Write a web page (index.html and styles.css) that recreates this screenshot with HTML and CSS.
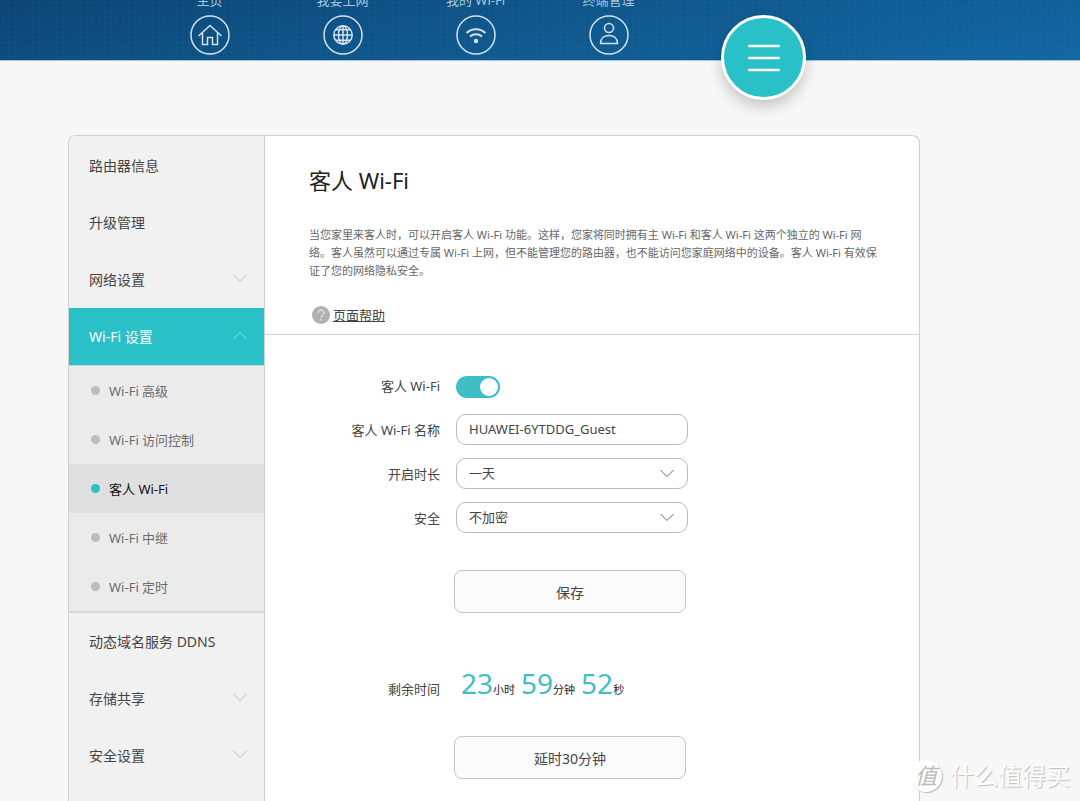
FILE: index.html
```
<!DOCTYPE html>
<html lang="zh-CN">
<head>
<meta charset="utf-8">
<meta name="viewport" content="width=device-width, initial-scale=1">
<title>客人 Wi-Fi</title>
<link rel="stylesheet" href="styles.css">
</head>
<body>
<div class="page">
  <header class="topbar">
    <nav class="topnav">
      <a class="topnav-item" href="#home">
        <span>主页</span>
        <svg class="topnav-icon" viewBox="0 0 40 40"><circle cx="20" cy="20" r="19"/><path d="M8.500 21 20 10.500 31.500 21M12.500 18v11.500h5v-7h5v7h5V18"/></svg>
      </a>
      <a class="topnav-item" href="#internet">
        <span>我要上网</span>
        <svg class="topnav-icon" viewBox="0 0 40 40"><circle cx="20" cy="20" r="19"/><circle cx="20" cy="20" r="9.200"/><ellipse cx="20" cy="20" rx="4.500" ry="9.200"/><path d="M20 10.800v18.400M10.800 20h18.400M12.500 14.800h15M12.500 25.200h15"/></svg>
      </a>
      <a class="topnav-item" href="#wifi">
        <span>我的 Wi-Fi</span>
        <svg class="topnav-icon" viewBox="0 0 40 40"><circle cx="20" cy="20" r="19"/><path class="arc" d="M10.500 18c5.500-5 13.500-5 19 0M14 21.500c3.500-3 8.500-3 12 0"/><circle class="solid" cx="20" cy="26" r="2.200"/></svg>
      </a>
      <a class="topnav-item" href="#devices">
        <span>终端管理</span>
        <svg class="topnav-icon" viewBox="0 0 40 40"><circle cx="20" cy="20" r="19"/><circle cx="20" cy="13" r="4.500"/><path d="M11.500 28.500c0-5 3.500-8 8.500-8s8.500 3 8.500 8z"/></svg>
      </a>
    </nav>
    <button class="more" type="button" aria-label="更多功能">
      <svg class="more-icon" viewBox="0 0 32 28"><path d="M1 2h30M1 14h30M1 26h30"/></svg>
    </button>
  </header>

  <div class="panel">
    <nav class="sidebar">
      <a class="side-item" href="#info">路由器信息</a>
      <a class="side-item" href="#upgrade">升级管理</a>
      <a class="side-item" href="#network">网络设置<svg class="chevron" viewBox="0 0 14 9"><path d="M.5 1 7 7.500 13.500 1"/></svg></a>
      <a class="side-item side-item-open" href="#wifi-settings">Wi-Fi 设置<svg class="chevron" viewBox="0 0 14 9"><path d="M.5 8 7 1.500 13.500 8"/></svg></a>
      <div class="submenu">
        <a class="sub-item" href="#advanced">Wi-Fi 高级</a>
        <a class="sub-item" href="#access">Wi-Fi 访问控制</a>
        <a class="sub-item sub-item-current" href="#guest" aria-current="page">客人 Wi-Fi</a>
        <a class="sub-item" href="#repeater">Wi-Fi 中继</a>
        <a class="sub-item" href="#timer">Wi-Fi 定时</a>
      </div>
      <a class="side-item" href="#ddns">动态域名服务 DDNS</a>
      <a class="side-item" href="#storage">存储共享<svg class="chevron" viewBox="0 0 14 9"><path d="M.5 1 7 7.500 13.500 1"/></svg></a>
      <a class="side-item" href="#security">安全设置<svg class="chevron" viewBox="0 0 14 9"><path d="M.5 1 7 7.500 13.500 1"/></svg></a>
    </nav>

    <main class="content">
      <section class="intro">
        <h1 class="title">客人 Wi-Fi</h1>
        <p class="description">当您家里来客人时，可以开启客人 Wi-Fi 功能。这样，您家将同时拥有主 Wi-Fi 和客人 Wi-Fi 这两个独立的 Wi-Fi 网<br>络。客人虽然可以通过专属 Wi-Fi 上网，但不能管理您的路由器，也不能访问您家庭网络中的设备。客人 Wi-Fi 有效保<br>证了您的网络隐私安全。</p>
        <a class="help" href="#help">
          <svg class="help-icon" viewBox="0 0 18 18"><circle cx="9" cy="9" r="9"/><path d="M6 7c0-4 6-4 6-.5C12 9 9 8.800 9 11.500M9 13v1.500"/></svg>
          <span class="help-text">页面帮助</span>
        </a>
      </section>

      <form class="form">
        <div class="fields">
          <label class="label" for="guest-on">客人 Wi-Fi</label>
          <input class="switch" id="guest-on" type="checkbox" checked>
          <label class="label" for="guest-name">客人 Wi-Fi 名称</label>
          <input class="control" id="guest-name" type="text" value="HUAWEI-6YTDDG_Guest">
          <label class="label" for="duration">开启时长</label>
          <div class="picker">
            <select class="control" id="duration"><option>一天</option></select>
            <svg class="chevron" viewBox="0 0 14 9"><path d="M.5 1 7 7.500 13.500 1"/></svg>
          </div>
          <label class="label" for="security-mode">安全</label>
          <div class="picker">
            <select class="control" id="security-mode"><option>不加密</option></select>
            <svg class="chevron" viewBox="0 0 14 9"><path d="M.5 1 7 7.500 13.500 1"/></svg>
          </div>
        </div>
        <button class="button" type="button">保存</button>
        <div class="remaining">
          <span class="label">剩余时间</span>
          <div class="clock">
            <span><b class="digits">23</b>小时</span>
            <span><b class="digits">59</b>分钟</span>
            <span><b class="digits">52</b>秒</span>
          </div>
        </div>
        <button class="button" type="button">延时30分钟</button>
      </form>
    </main>
  </div>

  <div class="watermark"><span class="watermark-badge">值</span><span>什么值得买</span></div>
</div>
</body>
</html>
```
FILE: styles.css
```
* {
  box-sizing: border-box;
}

body {
  margin: 0;
  background: #f7f7f7;
  color: #444;
  font-family: "Noto Sans", "Noto Sans CJK SC", sans-serif;
  font-size: 13px;
}

a {
  color: inherit;
  text-decoration: none;
}

button,
input,
select {
  font: inherit;
  color: inherit;
}

svg {
  fill: none;
  stroke: currentColor;
}

.page {
  position: relative;
  display: flex;
  flex-direction: column;
  height: 100vh;
  overflow: hidden;
}

.topbar {
  display: flex;
  align-items: flex-start;
  flex: none;
  height: 61px;
  padding-left: 143px;
  border-bottom: 1px solid #a9c3d8;
  background:
    radial-gradient(circle, rgba(60, 150, 180, 0.08) 1px, transparent 2px) 0 0 / 6px 5px,
    linear-gradient(168deg, #0c4474 0%, #0f5488 40%, #1267a3 100%);
}

.topnav {
  display: flex;
  margin-top: -10px;
}

.topnav-item {
  display: flex;
  flex-direction: column;
  align-items: center;
  gap: 5px;
  width: 133px;
  color: #a9c6dd;
  line-height: 20px;
}

.topnav-icon {
  width: 40px;
  height: 40px;
  color: #d3e2ee;
  stroke-width: 1.5;
}

.topnav-icon .arc {
  stroke-width: 2;
}

.topnav-icon .solid {
  fill: currentColor;
  stroke: none;
}

.more {
  display: grid;
  place-items: center;
  width: 85px;
  height: 85px;
  margin: 15px 0 0 46px;
  padding: 0;
  border: 3px solid #fff;
  border-radius: 50%;
  background: #29c0c8;
  color: #fff;
  box-shadow: 0 7px 14px rgba(0, 0, 0, 0.2);
}

.more-icon {
  width: 32px;
  height: 28px;
  stroke-width: 2.5;
  stroke-linecap: round;
}

.panel {
  display: flex;
  flex: 1;
  min-height: 0;
  margin: 74px 160px 0 68px;
  border: 1px solid #d0d0d0;
  border-bottom: 0;
  border-radius: 8px 8px 0 0;
  background: #fff;
  overflow: hidden;
}

.sidebar {
  flex: none;
  width: 196px;
  padding-top: 1px;
  border-right: 1px solid #d0d0d0;
  background: #f1f1f1;
}

.side-item {
  display: flex;
  align-items: center;
  justify-content: space-between;
  height: 57px;
  padding: 0 17px 2px 20px;
  font-size: 14px;
}

.side-item-open {
  height: 58px;
  border-bottom: 1px solid #d0d0d0;
  background: #29c0c8;
  color: #fff;
}

.chevron {
  width: 14px;
  height: 9px;
  color: #b8b8b8;
}

.side-item-open .chevron {
  color: #a5e3e6;
}

.submenu {
  border-bottom: 2px solid #d8d8d8;
  background: #ebebeb;
}

.sub-item {
  display: flex;
  align-items: center;
  gap: 9px;
  height: 49px;
  padding-left: 22px;
  color: #6c6c6c;
}

.sub-item::before {
  content: "";
  width: 9px;
  height: 9px;
  border-radius: 50%;
  background: #bcbcbc;
}

.sub-item-current {
  background: #dfdfdf;
  color: #111;
}

.sub-item-current::before {
  background: #29c0c8;
}

.content {
  flex: 1;
  min-width: 0;
}

.intro {
  padding: 29px 30px 10px 44px;
  border-bottom: 1px solid #d0d0d0;
}

.title {
  margin: 0;
  color: #222;
  font-size: 22px;
  font-weight: 400;
  line-height: 30px;
}

.description {
  margin: 31px 0 26px;
  color: #666;
  font-size: 11px;
  line-height: 18px;
  white-space: nowrap;
}

.help {
  display: flex;
  align-items: center;
  gap: 3px;
  padding-left: 3px;
  line-height: 18px;
}

.help-icon {
  width: 18px;
  height: 18px;
  color: #fff;
}

.help-icon circle {
  fill: #b0b0b0;
  stroke: none;
}

.help-text {
  text-decoration: underline;
}

.form {
  padding-top: 28px;
}

.fields {
  display: grid;
  grid-template-columns: 175px 232px;
  grid-auto-rows: 44px;
  align-items: center;
  column-gap: 16px;
}

.label {
  text-align: right;
}

.switch {
  appearance: none;
  width: 44px;
  height: 22px;
  margin: 4px 0 0;
  padding: 2px 2px 2px 24px;
  border-radius: 11px;
  background: #3fbfc5;
}

.switch::before {
  content: "";
  display: block;
  width: 18px;
  height: 18px;
  border-radius: 50%;
  background: #fff;
}

.control {
  appearance: none;
  width: 100%;
  height: 31px;
  padding: 0 12px;
  border: 1px solid #bbb;
  border-radius: 10px;
  background: #fff;
}

.picker {
  display: grid;
  align-items: center;
}

.picker > * {
  grid-area: 1 / 1;
}

.picker .chevron {
  justify-self: end;
  margin-right: 14px;
  color: #666;
  pointer-events: none;
}

.button {
  display: block;
  width: 232px;
  height: 43px;
  margin: 31px 0 0 189px;
  border: 1px solid #c4c4c4;
  border-radius: 8px;
  background: #fbfbfb;
  font-size: 14px;
}

.remaining {
  display: grid;
  grid-template-columns: 175px 1fr;
  align-items: baseline;
  column-gap: 21px;
  margin-top: 50px;
}

.remaining + .button {
  margin-top: 26px;
}

.clock {
  display: flex;
  gap: 6px;
  color: #222;
  font-size: 11px;
  line-height: 40px;
}

.digits {
  color: #3fbfc5;
  font-size: 28px;
  font-weight: 400;
}

.watermark {
  position: absolute;
  right: 10px;
  bottom: 9px;
  display: flex;
  align-items: center;
  gap: 8px;
  color: #fff;
  font-size: 24px;
  line-height: 32px;
  text-shadow: 1px 1px 1px #bbb;
}

.watermark-badge {
  display: flex;
  justify-content: center;
  width: 32px;
  height: 32px;
  border-radius: 50%;
  background: #fff;
  box-shadow: 1px 1px 1px #bbb;
  color: #bbb;
  font-size: 22px;
  font-style: italic;
  line-height: 30px;
  text-shadow: none;
}
```
